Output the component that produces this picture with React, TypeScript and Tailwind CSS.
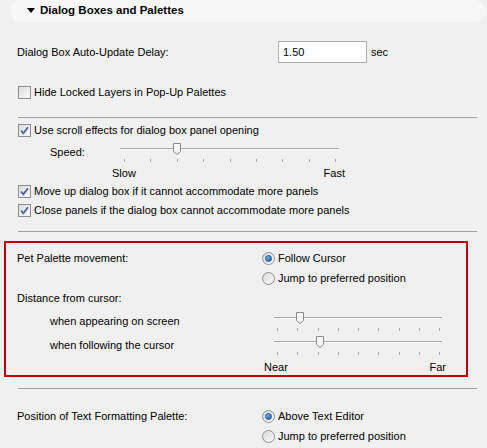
import React from "react";

const font = { fontFamily: '"Liberation Sans", Arial, sans-serif' };

function Check({ checked }: { checked?: boolean }) {
  return (
    <span className="relative inline-block h-[13px] w-[13px] shrink-0 border border-[#8f8f8f] bg-gradient-to-br from-[#dcdcdc] to-[#fafafa]">
      {checked ? (
        <svg viewBox="0 0 11 11" className="absolute left-0 top-0 h-[11px] w-[11px]">
          <path d="M2 5.5 L4.3 8.3 L9 2.2" fill="none" stroke="#4a5ea0" strokeWidth="1.7" />
        </svg>
      ) : null}
    </span>
  );
}

function Radio({ on }: { on?: boolean }) {
  return (
    <span className="relative inline-flex h-[13px] w-[13px] shrink-0 items-center justify-center rounded-full border border-[#8f8f8f] bg-gradient-to-br from-[#d8d8d8] to-[#fbfbfb]">
      {on ? (
        <span className="h-[7px] w-[7px] rounded-full border border-[#1c4f85] bg-gradient-to-br from-[#7fc4ef] to-[#0f5ea8]" />
      ) : null}
    </span>
  );
}

function Thumb() {
  return (
    <svg width="8" height="12" viewBox="0 0 8 12" className="absolute top-0">
      <path d="M0.5 0.5 H7.5 V8.5 L4 11.5 L0.5 8.5 Z" fill="#f4f4f4" stroke="#8a8a8a" />
      <path d="M1.5 1.5 H6.5" stroke="#ffffff" />
    </svg>
  );
}

function Slider({
  width,
  ticks,
  inset,
  pos,
}: {
  width: number;
  ticks: number;
  inset: number;
  pos: number;
}) {
  const span = width - inset * 2;
  return (
    <div className="relative h-[24px] shrink-0" style={{ width }}>
      <div className="absolute left-0 right-0 top-[6px] h-[1px] bg-[#a8a8a8]" />
      <div className="absolute left-0 right-0 top-[7px] h-[1px] bg-white" />
      {Array.from({ length: ticks }).map((_, i) => (
        <div
          key={i}
          className="absolute top-[17px] h-[3px] w-[1px] bg-[#a8a8a8]"
          style={{ left: inset + Math.round((span * i) / (ticks - 1)) }}
        />
      ))}
      <div className="absolute top-[1px]" style={{ left: pos }}>
        <Thumb />
      </div>
    </div>
  );
}

function Sep() {
  return <div className="ml-[18px] h-[1px] w-[459px] bg-[#a0a0a0]" />;
}

export default function App() {
  return (
    <div
      className="h-[448px] w-[487px] overflow-hidden bg-[#f0f0f0] text-[11px] text-black"
      style={font}
    >
      <div className="ml-[10px] flex h-[22px] w-[475px] items-center rounded-[11px] bg-[#f7f7f7]">
        <svg width="8" height="6" viewBox="0 0 8 6" className="ml-[17px]">
          <path d="M0 0 H8 L4 5 Z" fill="#000" />
        </svg>
        <span className="ml-[5px] text-[11.5px] font-bold">Dialog Boxes and Palettes</span>
      </div>

      <div className="mt-[19px] flex h-[22px] items-center">
        <span className="ml-[17px] w-[261px]">Dialog Box Auto-Update Delay:</span>
        <div className="flex h-[22px] w-[89px] items-center border border-[#abadb3] bg-white pl-[4px]">
          1.50
        </div>
        <span className="ml-[4px]">sec</span>
      </div>

      <div className="mt-[19px] flex h-[20px] items-center pl-[18px]">
        <Check />
        <span className="ml-[3px]">Hide Locked Layers in Pop-Up Palettes</span>
      </div>

      <div className="mt-[15px]">
        <Sep />
      </div>

      <div className="mt-[2px] flex h-[20px] items-center pl-[18px]">
        <Check checked />
        <span className="ml-[3px]">Use scroll effects for dialog box panel opening</span>
      </div>

      <div className="mt-[2px] flex">
        <span className="ml-[50px] h-[20px] w-[70px] leading-[20px]">Speed:</span>
        <Slider width={219} ticks={9} inset={4} pos={53} />
      </div>
      <div className="ml-[112px] flex h-[14px] w-[233px] items-center justify-between">
        <span>Slow</span>
        <span>Fast</span>
      </div>

      <div className="mt-[2px] flex h-[19px] items-center pl-[18px]">
        <Check checked />
        <span className="ml-[3px]">Move up dialog box if it cannot accommodate more panels</span>
      </div>
      <div className="flex h-[19px] items-center pl-[18px]">
        <Check checked />
        <span className="ml-[3px]">Close panels if the dialog box cannot accommodate more panels</span>
      </div>

      <div className="mt-[11px]">
        <Sep />
      </div>

      <div className="ml-[4px] mt-[9px] h-[136px] w-[464px] border-2 border-[#c00000] pt-[5px]">
        <div className="flex h-[20px] items-center">
          <span className="ml-[11px] w-[245px]">Pet Palette movement:</span>
          <Radio on />
          <span className="ml-[3px]">Follow Cursor</span>
        </div>
        <div className="flex h-[20px] items-center">
          <span className="ml-[11px] w-[245px]" />
          <Radio />
          <span className="ml-[3px]">Jump to preferred position</span>
        </div>
        <div className="flex h-[20px] items-center">
          <span className="ml-[11px]">Distance from cursor:</span>
        </div>
        <div className="mt-[3px] flex">
          <span className="ml-[44px] h-[20px] w-[224px] leading-[20px]">when appearing on screen</span>
          <Slider width={168} ticks={9} inset={3} pos={22} />
        </div>
        <div className="flex">
          <span className="ml-[44px] h-[20px] w-[224px] leading-[20px]">when following the cursor</span>
          <Slider width={168} ticks={9} inset={3} pos={42} />
        </div>
        <div className="ml-[258px] mt-[1px] flex h-[14px] w-[182px] items-center justify-between">
          <span>Near</span>
          <span>Far</span>
        </div>
      </div>

      <div className="mt-[11px]">
        <Sep />
      </div>

      <div className="mt-[17px] flex h-[20px] items-center">
        <span className="ml-[17px] w-[245px]">Position of Text Formatting Palette:</span>
        <Radio on />
        <span className="ml-[3px]">Above Text Editor</span>
      </div>
      <div className="flex h-[20px] items-center">
        <span className="ml-[17px] w-[245px]" />
        <Radio />
        <span className="ml-[3px]">Jump to preferred position</span>
      </div>
    </div>
  );
}
